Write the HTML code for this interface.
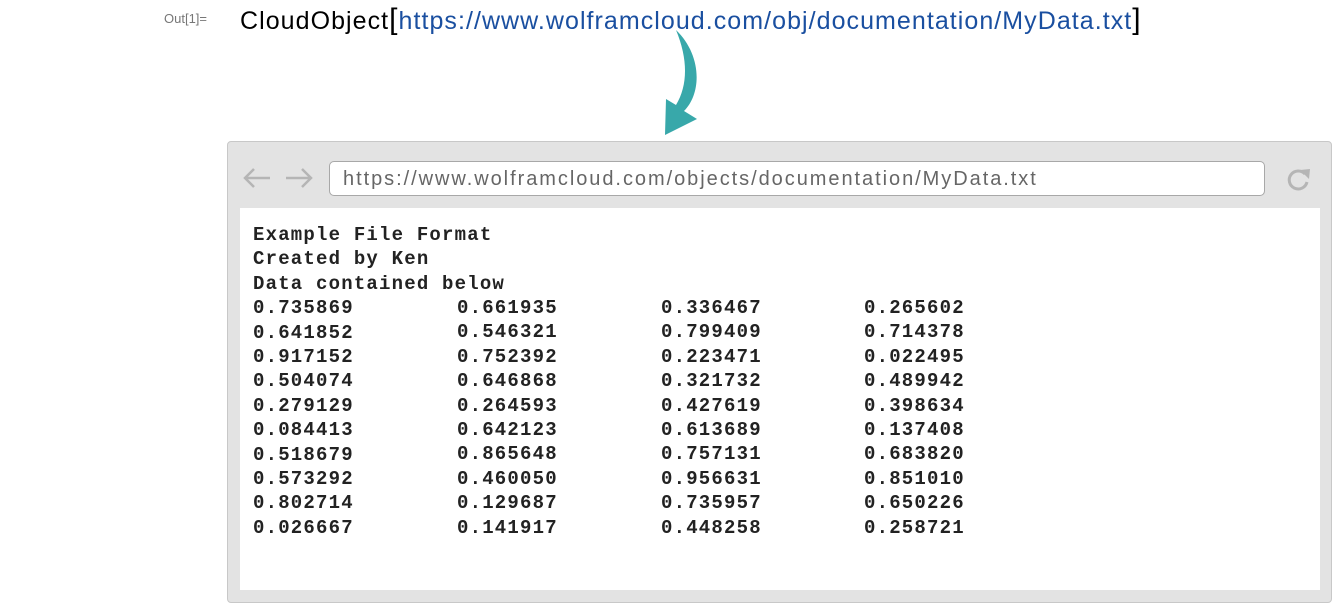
<!DOCTYPE html>
<html><head><style>
body{margin:0;width:1340px;height:614px;background:#fff;position:relative;overflow:hidden;font-family:"Liberation Sans",sans-serif}
.out{position:absolute;left:164px;top:11px;font-size:13px;color:#777}
.top{position:absolute;left:240px;top:3px;font-size:25px;color:#000;white-space:nowrap;letter-spacing:1.05px}
.top .u{color:#1a4fa0}
.frame{position:absolute;left:227px;top:141px;width:1105px;height:462px;background:#e3e3e3;border:1px solid #c8c8c8;border-radius:4px;box-sizing:border-box}
.url{position:absolute;left:329px;top:161px;width:936px;height:35px;background:#fff;border:1px solid #a8a8a8;border-radius:5px;box-sizing:border-box;font-size:20px;color:#666;padding:6px 0 0 13px;white-space:nowrap;letter-spacing:1.95px}
.content{position:absolute;left:240px;top:208px;width:1080px;height:382px;background:#fff}
.m{position:absolute;font-family:"Liberation Mono",monospace;font-weight:bold;font-size:19px;letter-spacing:1.2px;color:#222;line-height:24.4px;white-space:pre;top:223px}
</style></head><body>
<div class="out">Out[1]=</div>
<div class="top">CloudObject<span style="font-size:30px;font-weight:300">[</span><span class="u">https://www.wolframcloud.com/obj/documentation/MyData.txt</span><span style="font-size:30px;font-weight:300">]</span></div>
<svg style="position:absolute;left:640px;top:25px" width="80" height="115"><path d="M36 5 C62 30 62 68 44 86 L57 94 L25 110 L26 74 L36 80 C48 60 48 34 36 5 Z" fill="#38a8aa"/></svg>
<div class="frame"></div>
<svg style="position:absolute;left:240px;top:165px" width="80" height="26"><g stroke="#b5b5b5" stroke-width="2.5" fill="none"><path d="M30 13H5M14 4L5 13L14 22"/><path d="M46 13H71M62 4L71 13L62 22"/></g></svg>
<div class="url">https://www.wolframcloud.com/objects/documentation/MyData.txt</div>
<svg style="position:absolute;left:1285px;top:166px" width="28" height="26"><path d="M20 8A9 9 0 1 0 22 16" stroke="#b5b5b5" stroke-width="3" fill="none"/><path d="M15 4L25 3L24 13Z" fill="#b5b5b5"/></svg>
<div class="content"></div>
<div class="m" style="left:253px">Example File Format
Created by Ken
Data contained below
0.735869
0.641852
0.917152
0.504074
0.279129
0.084413
0.518679
0.573292
0.802714
0.026667</div>
<div class="m" style="left:457px;top:296px">0.661935
0.546321
0.752392
0.646868
0.264593
0.642123
0.865648
0.460050
0.129687
0.141917</div>
<div class="m" style="left:661px;top:296px">0.336467
0.799409
0.223471
0.321732
0.427619
0.613689
0.757131
0.956631
0.735957
0.448258</div>
<div class="m" style="left:864px;top:296px">0.265602
0.714378
0.022495
0.489942
0.398634
0.137408
0.683820
0.851010
0.650226
0.258721</div>
</body></html>
